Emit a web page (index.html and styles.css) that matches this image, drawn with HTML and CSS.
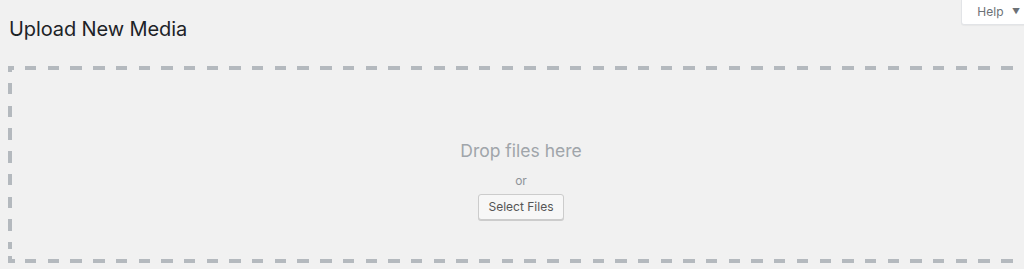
FILE: index.html
```html
<!DOCTYPE html>
<html lang="en">
<head>
<meta charset="utf-8">
<title>Upload New Media</title>
<link rel="stylesheet" href="styles.css">
</head>
<body>
<div class="page">
  <header class="head">
    <h1 class="title">Upload New Media</h1>
    <button class="help-tab" type="button">Help <span class="arrow">&#9660;</span></button>
  </header>
  <div class="drop-zone">
    <div class="drop-inside">
      <p class="drop-text">Drop files here</p>
      <p class="or-text">or</p>
      <button class="select-btn" type="button">Select Files</button>
    </div>
  </div>
</div>
</body>
</html>
```

FILE: styles.css
```css
html, body {
  margin: 0;
  padding: 0;
  background: #f1f1f1;
  overflow: hidden;
}
body {
  font-family: Inter, "Noto Sans", "Liberation Sans", sans-serif;
  color: #23282d;
}
.page {
  width: 1024px;
  height: 269px;
  overflow: hidden;
}
.head {
  display: flex;
  align-items: flex-start;
  padding-left: 9px;
  height: 66px;
}
.title {
  margin: 0;
  padding-top: 17px;
  font-size: 20px;
  font-weight: 400;
  line-height: 24px;
  color: #1d2327;
  letter-spacing: -0.1px;
}
.help-tab {
  margin-left: auto;
  margin-right: -23px;
  font-family: inherit;
  font-size: 12px;
  line-height: 20px;
  color: #6c7176;
  background: #fff;
  border: 1px solid #e2e4e7;
  border-top: 0;
  border-radius: 0 0 3px 3px;
  padding: 2px 26px 2px 15px;
  box-shadow: 0 1px 1px rgba(0,0,0,.04);
  height: 25px;
  white-space: nowrap;
}
.arrow {
  font-size: 8px;
  margin-left: 5px;
  position: relative;
  top: -2px;
}
.drop-zone {
  --c: #b4b9be;
  box-sizing: border-box;
  margin-left: 8px;
  width: 1026px;
  height: 197px;
  padding: 4px;
  background:
    linear-gradient(var(--c), var(--c)) left bottom / 4px 7px no-repeat,
    linear-gradient(var(--c), var(--c)) left bottom / 7px 4px no-repeat,
    repeating-linear-gradient(to right, var(--c) 0 5.7px, transparent 5.7px 17px, var(--c) 17px 22.7px) left top / 100% 4px no-repeat,
    repeating-linear-gradient(to right, var(--c) 0 5.7px, transparent 5.7px 17px, var(--c) 17px 22.7px) left bottom / 100% 4px no-repeat,
    repeating-linear-gradient(to bottom, var(--c) 0 5.7px, transparent 5.7px 17px, var(--c) 17px 22.7px) left top / 4px calc(100% - 14px) no-repeat,
    repeating-linear-gradient(to bottom, var(--c) 0 5.7px, transparent 5.7px 17px, var(--c) 17px 22.7px) right top / 4px 100% no-repeat;
}
.drop-inside {
  display: flex;
  flex-direction: column;
  align-items: center;
  padding-top: 69px;
}
.drop-text {
  margin: 0;
  font-size: 17.5px;
  line-height: 24px;
  color: #a0a5aa;
}
.or-text {
  margin: 10px 0 0;
  font-size: 12px;
  line-height: 16px;
  color: #8f9499;
}
.select-btn {
  margin-top: 5px;
  font-family: inherit;
  font-size: 12px;
  color: #555;
  background: #f7f7f7;
  border: 1px solid #ccc;
  border-radius: 3px;
  box-shadow: 0 1px 0 #ccc;
  height: 26px;
  width: 86px;
  padding: 0;
  line-height: 24px;
}
```
